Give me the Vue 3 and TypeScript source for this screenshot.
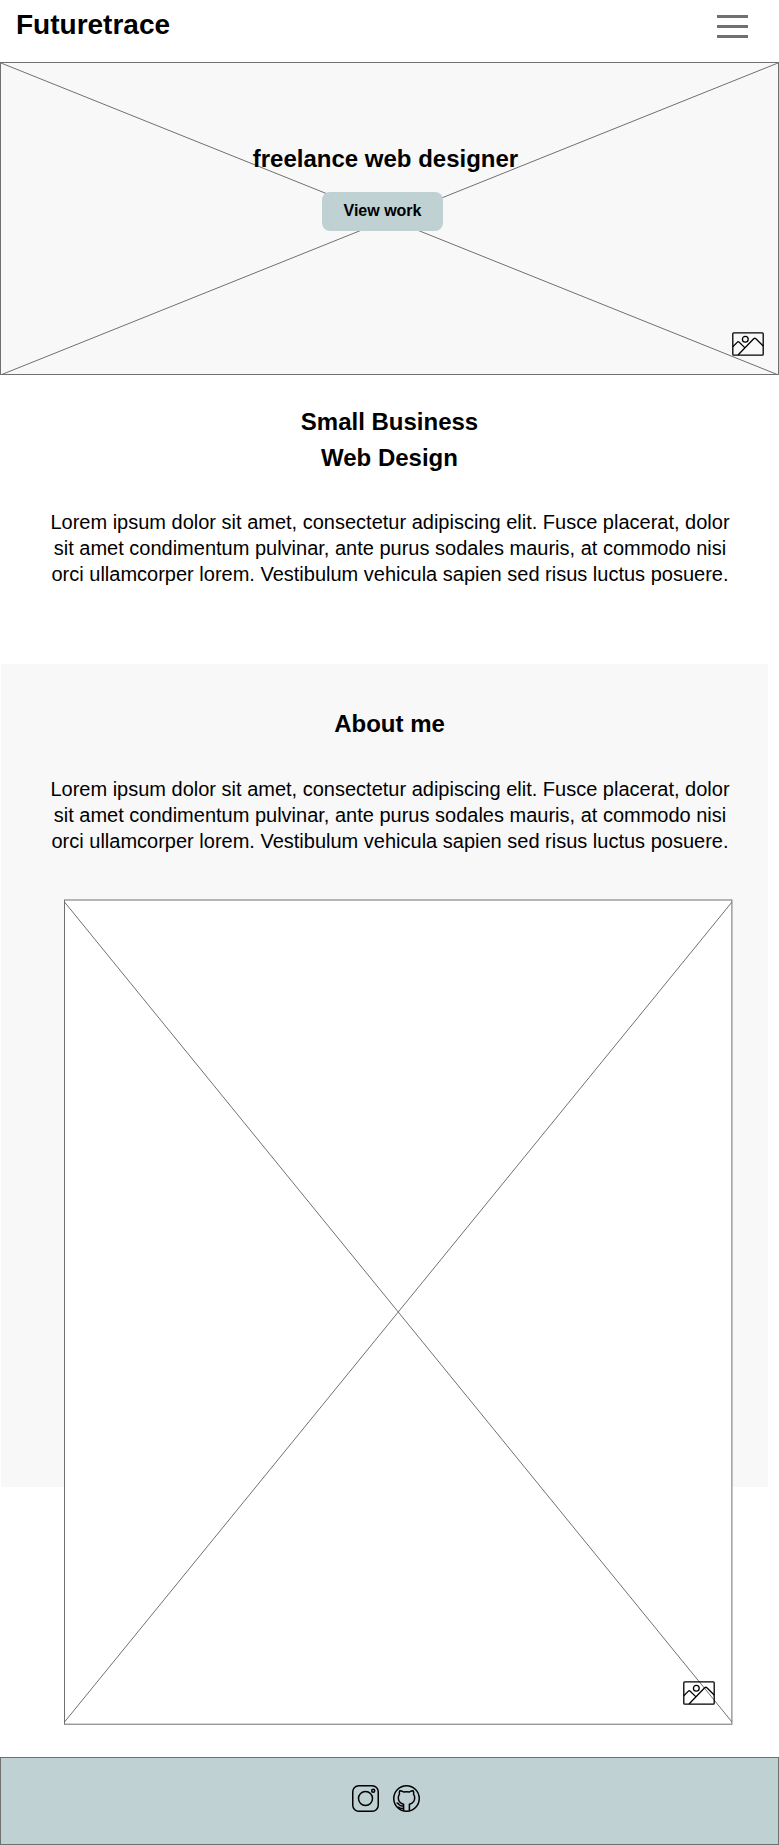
<script setup lang="ts">
const brand: string = 'Futuretrace'
const lorem: string[] = [
  'Lorem ipsum dolor sit amet, consectetur adipiscing elit. Fusce placerat, dolor',
  'sit amet condimentum pulvinar, ante purus sodales mauris, at commodo nisi',
  'orci ullamcorper lorem. Vestibulum vehicula sapien sed risus luctus posuere.',
]
</script>

<template>
  <div class="page">
    <header class="header">
      <h1 class="brand">{{ brand }}</h1>
      <button class="menu" aria-label="Menu"><span /><span /><span /></button>
    </header>

    <section class="hero">
      <svg class="cross" viewBox="0 0 779 313" aria-hidden="true">
        <path d="M.5 .8L778.5 313M778.5 .8L.5 313" />
        <rect x=".5" y=".5" width="778" height="312" />
      </svg>
      <h2 class="tagline">freelance web designer</h2>
      <button class="cta">View work</button>
      <svg class="picture" viewBox="0 0 32 24" aria-hidden="true">
        <rect x=".8" y=".8" width="30.4" height="22.4" rx="1" />
        <circle cx="13.3" cy="7.2" r="2.9" />
        <path d="M.8 14.8L5.4 10.1Q6.2 9.4 7 10.1L12.5 15.4M6 23L21.7 6.8Q22.8 5.8 23.9 6.8L31.2 14" />
      </svg>
    </section>

    <section class="services">
      <h2 class="title">Small Business<br />Web Design</h2>
      <p class="copy"><template v-for="line in lorem" :key="line">{{ line }}<br /></template></p>
    </section>

    <section class="about">
      <h2 class="title">About me</h2>
      <p class="copy"><template v-for="line in lorem" :key="line">{{ line }}<br /></template></p>
      <div class="portrait">
        <svg class="cross" viewBox="0 0 669 826" aria-hidden="true">
          <rect class="white" x=".5" y="1" width="667.4" height="824.2" />
          <path d="M.5 3L668 823M668 3L.5 823" />
        </svg>
        <svg class="picture" viewBox="0 0 32 24" aria-hidden="true">
          <rect x=".8" y=".8" width="30.4" height="22.4" rx="1" />
          <circle cx="13.3" cy="7.2" r="2.9" />
          <path d="M.8 14.8L5.4 10.1Q6.2 9.4 7 10.1L12.5 15.4M6 23L21.7 6.8Q22.8 5.8 23.9 6.8L31.2 14" />
        </svg>
      </div>
    </section>

    <footer class="footer">
      <svg class="social" viewBox="0 0 27 27" aria-label="Instagram">
        <rect x=".75" y=".75" width="25.5" height="25.5" rx="6" />
        <circle cx="13.5" cy="13.5" r="7" />
        <circle cx="21.2" cy="5.8" r="1.5" />
      </svg>
      <svg class="social" viewBox="0 0 27 27" aria-label="GitHub">
        <circle cx="13.5" cy="13.5" r="12.75" />
        <path d="M10.6 25.6V19.2C7 18.3 5.3 16.4 5.3 12.7Q5.3 10.6 6.5 9.1Q6 7.3 6.7 5.7Q8.8 5.7 10.6 7Q13.5 6.4 16.4 7Q18.2 5.7 20.3 5.7Q21 7.3 20.5 9.1Q21.7 10.6 21.7 12.7C21.7 16.4 20 18.3 16.4 19.2V25.6" />
        <path d="M3.6 18.1Q5.4 18.2 6.4 19.9Q7.5 21.4 10.6 20.9M5 21.7Q7.4 23.9 10.6 23.4" />
      </svg>
    </footer>
  </div>
</template>

<style>
body {
  margin: 0;
  background: #fff;
}
</style>

<style scoped>
.page {
  width: 779px;
  height: 1845px;
  display: flex;
  flex-direction: column;
  overflow: hidden;
  background: #fff;
  color: #000;
  font-family: "Liberation Sans", Arial, sans-serif;
}
h1, h2, p {
  margin: 0;
}
button {
  border: 0;
  padding: 0;
  font-family: inherit;
  color: inherit;
}
svg {
  display: block;
  fill: none;
}
.header {
  height: 62px;
  box-sizing: border-box;
  padding: 8px 31px 0 16px;
  display: flex;
  justify-content: space-between;
  align-items: flex-start;
}
.brand {
  font-size: 28px;
  line-height: 34px;
}
.menu {
  margin-top: 7px;
  width: 31px;
  display: flex;
  flex-direction: column;
  gap: 7px;
  background: none;
}
.menu span {
  height: 3px;
  background: #707070;
}
.hero {
  position: relative;
  height: 313px;
  display: flex;
  flex-direction: column;
  align-items: center;
  background: #f8f8f8;
}
.cross {
  position: absolute;
  inset: 0;
  width: 100%;
  height: 100%;
  stroke: #707070;
  stroke-width: 1;
}
.white {
  fill: #fff;
}
.tagline {
  position: relative;
  margin: 79px 8px 0 0;
  font-size: 24px;
  line-height: 36px;
}
.cta {
  position: relative;
  margin: 15px 14px 0 0;
  width: 121px;
  height: 39px;
  padding-bottom: 1px;
  border-radius: 8px;
  background: #bfd1d3;
  font-size: 16px;
  font-weight: 700;
}
.picture {
  position: absolute;
  right: 15px;
  bottom: 19px;
  width: 32px;
  height: 24px;
  stroke: #000;
  stroke-width: 1.3;
}
.services {
  height: 289px;
  box-sizing: border-box;
  padding-top: 29px;
  text-align: center;
}
.title {
  font-size: 24px;
  line-height: 36px;
}
.copy {
  padding-left: 1px;
  font-size: 20px;
  line-height: 26px;
  white-space: nowrap;
}
.services .copy {
  margin-top: 33px;
}
.about {
  width: 767px;
  height: 823px;
  box-sizing: border-box;
  margin: 0 0 270px 1px;
  padding-top: 42px;
  background: #f8f8f8;
  text-align: center;
}
.about .title,
.about .copy {
  margin-right: -10px;
}
.about .copy {
  margin-top: 34px;
}
.portrait {
  position: relative;
  width: 669px;
  height: 826px;
  margin: 45px 0 0 63px;
}
.portrait .picture {
  right: 18px;
  bottom: 20px;
}
.footer {
  height: 88px;
  box-sizing: border-box;
  border: 1px solid #707070;
  display: flex;
  justify-content: center;
  gap: 14px;
  padding: 27px 7px 0 0;
  background: #bfd1d3;
}
.social {
  width: 27px;
  height: 27px;
  stroke: #000;
  stroke-width: 1.5;
  stroke-linejoin: round;
}
</style>
